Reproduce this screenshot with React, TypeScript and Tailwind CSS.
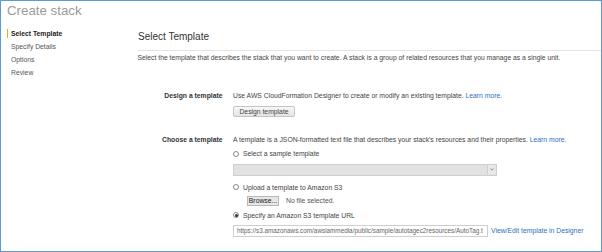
import React from "react";

function Radio({ checked, label }: { checked?: boolean; label: string }) {
  return (
    <div className="flex items-center h-[9px] leading-[9px]">
      <span className="w-[6px] h-[6px] rounded-full border border-[#8a8a8a] bg-white flex items-center justify-center shrink-0">
        {checked && <span className="w-[3px] h-[3px] rounded-full bg-[#333]" />}
      </span>
      <span className="ml-[4px]">{label}</span>
    </div>
  );
}

export default function App() {
  const navItems = ["Select Template", "Specify Details", "Options", "Review"];

  return (
    <div className="w-[602px] h-[252px] border-[1.5px] border-[#5b9bd5] bg-white overflow-hidden font-['Liberation_Sans',Arial,sans-serif] text-[6.8px] text-[#444]">
      <div className="pl-[6px] pt-[3px] h-[17px] text-[13.3px] leading-[14px] text-[#9b9b9b]">
        Create stack
      </div>
      <div className="flex">
        <nav className="w-[136.5px] pl-[5.5px] pt-[11px] shrink-0">
          {navItems.map((item, i) => (
            <div
              key={item}
              className={`h-[9px] leading-[9px] mb-[4px] border-l-[1.5px] pl-[3.5px] ${
                i === 0 ? "border-[#f5a623] font-bold text-[#222]" : "border-transparent text-[#555]"
              }`}
            >
              {item}
            </div>
          ))}
        </nav>
        <main className="flex-1 pt-[14px]">
          <h1 className="text-[10px] leading-[10px] text-[#333] pl-[0.5px] pb-[7.5px] border-b border-[#e4e4e4]">
            Select Template
          </h1>
          <p className="mt-[2.5px] h-[9px] leading-[9px]">
            Select the template that describes the stack that you want to create. A stack is a group of related
            resources that you manage as a single unit.
          </p>

          <div className="flex mt-[29px]">
            <div className="w-[85px] text-right font-bold text-[#333] leading-[9px]">Design a template</div>
            <div className="ml-[10.5px]">
              <div className="h-[9px] leading-[9px]">
                Use AWS CloudFormation Designer to create or modify an existing template.{" "}
                <span className="text-[#2a72c0]">Learn more.</span>
              </div>
              <button className="mt-[5.5px] w-[62px] h-[11.5px] rounded-[2px] border border-[#c4c4c4] bg-gradient-to-b from-[#f8f8f8] to-[#e4e4e4] text-[#444] leading-[9px]">
                Design template
              </button>
            </div>
          </div>

          <div className="flex mt-[18px]">
            <div className="w-[85px] text-right font-bold text-[#333] leading-[9px]">Choose a template</div>
            <div className="ml-[10.5px] flex-1">
              <div className="h-[9px] leading-[9px]">
                A template is a JSON-formatted text file that describes your stack's resources and their properties.{" "}
                <span className="text-[#2a72c0]">Learn more.</span>
              </div>
              <div className="mt-[5px]">
                <Radio label="Select a sample template" />
              </div>
              <div className="mt-[5.5px] w-[264px] h-[12px] border border-[#cfcfcf] bg-[#e2e2e2] flex justify-end items-center pr-[1px]">
                <div className="w-[8px] h-[9px] border-l border-[#cfcfcf] bg-[#e8e8e8] flex items-center justify-center">
                  <svg width="4" height="3" viewBox="0 0 4 3">
                    <path d="M0.5 0.5 L2 2.2 L3.5 0.5" stroke="#666" strokeWidth="0.7" fill="none" />
                  </svg>
                </div>
              </div>
              <div className="mt-[7px]">
                <Radio label="Upload a template to Amazon S3" />
              </div>
              <div className="mt-[4.5px] ml-[14px] flex items-center h-[10px]">
                <span className="w-[32px] h-[10px] border border-[#b9b9b9] bg-[#e6e6e6] text-[#222] leading-[8px] flex items-center justify-center">
                  Browse...
                </span>
                <span className="ml-[7px] text-[#555]">No file selected.</span>
              </div>
              <div className="mt-[4.5px]">
                <Radio checked label="Specify an Amazon S3 template URL" />
              </div>
              <div className="mt-[5.5px] flex items-center">
                <div className="w-[255px] h-[12px] border border-[#cfcfcf] bg-white pl-[3px] leading-[10px] text-[6.35px] text-[#666] overflow-hidden whitespace-nowrap">
                  https://s3.amazonaws.com/awsiammedia/public/sample/autotagec2resources/AutoTag.t
                </div>
                <span className="ml-[3px] text-[#2a72c0] whitespace-nowrap">View/Edit template in Designer</span>
              </div>
            </div>
          </div>
        </main>
      </div>
    </div>
  );
}
